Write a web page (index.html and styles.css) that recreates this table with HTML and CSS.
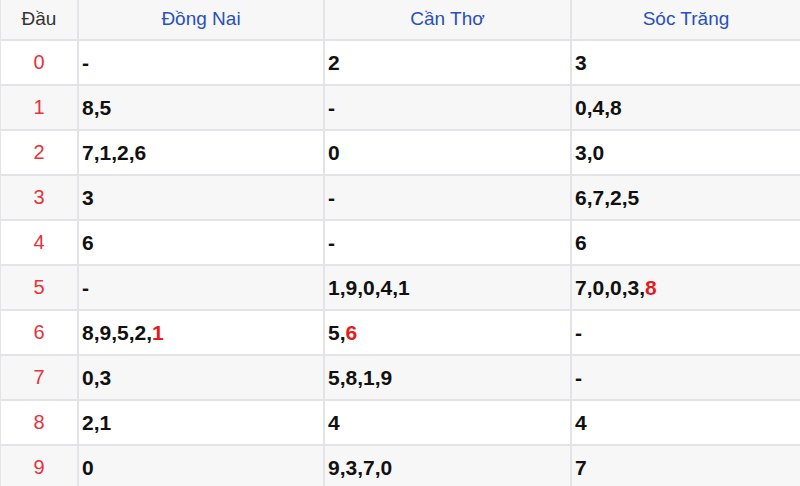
FILE: index.html
```html
<!DOCTYPE html>
<html lang="vi">
<head>
<meta charset="utf-8">
<link rel="stylesheet" href="styles.css">
</head>
<body>
<table class="loto">
  <colgroup>
    <col class="c-head">
    <col class="c-a">
    <col class="c-b">
    <col class="c-c">
  </colgroup>
  <thead>
    <tr><th class="dau">Đầu</th><th>Đồng Nai</th><th>Cần Thơ</th><th>Sóc Trăng</th></tr>
  </thead>
  <tbody>
    <tr><td class="num">0</td><td>-</td><td>2</td><td>3</td></tr>
    <tr><td class="num">1</td><td>8,5</td><td>-</td><td>0,4,8</td></tr>
    <tr><td class="num">2</td><td>7,1,2,6</td><td>0</td><td>3,0</td></tr>
    <tr><td class="num">3</td><td>3</td><td>-</td><td>6,7,2,5</td></tr>
    <tr><td class="num">4</td><td>6</td><td>-</td><td>6</td></tr>
    <tr><td class="num">5</td><td>-</td><td>1,9,0,4,1</td><td>7,0,0,3,<span class="hl">8</span></td></tr>
    <tr><td class="num">6</td><td>8,9,5,2,<span class="hl">1</span></td><td>5,<span class="hl">6</span></td><td>-</td></tr>
    <tr><td class="num">7</td><td>0,3</td><td>5,8,1,9</td><td>-</td></tr>
    <tr><td class="num">8</td><td>2,1</td><td>4</td><td>4</td></tr>
    <tr><td class="num">9</td><td>0</td><td>9,3,7,0</td><td>7</td></tr>
  </tbody>
</table>
</body>
</html>
```
FILE: styles.css
```css
html, body {
  margin: 0;
  padding: 0;
  background: #ffffff;
}
body {
  font-family: "Liberation Sans", Arial, sans-serif;
  overflow: hidden;
}
.loto {
  width: 801px;
  margin-left: -1px;
  margin-top: -1px;
  border-collapse: collapse;
  table-layout: fixed;
}
.c-head { width: 78px; }
.c-a { width: 246px; }
.c-b { width: 247px; }
.c-c { width: 230px; }

.loto th,
.loto td {
  border: 2px solid #e4e4e8;
  padding: 0 0 0 3px;
  height: 43px;
  vertical-align: middle;
}
.loto thead th {
  border-top: none;
  height: 40px;
  font-weight: normal;
  font-size: 19px;
  color: #2a4fbf;
  text-align: center;
  padding: 0;
}
.loto thead th.dau {
  color: #333333;
}
.loto thead tr,
.loto tbody tr:nth-child(even) {
  background: #f7f7f7;
}
.loto td {
  font-size: 21px;
  font-weight: bold;
  color: #111111;
}
.loto td.num {
  font-weight: normal;
  font-size: 20px;
  color: #e8323a;
  text-align: center;
  padding: 0;
}
.hl {
  color: #e51b1b;
}
```
